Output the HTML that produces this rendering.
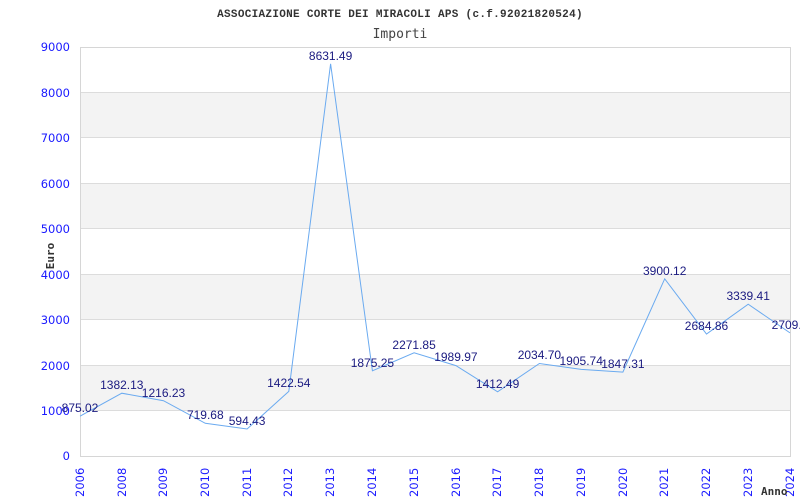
<!DOCTYPE html>
<html><head><meta charset="utf-8"><style>html,body{margin:0;padding:0;background:#fff;}svg{display:block}</style></head>
<body>
<svg width="800" height="500" viewBox="0 0 800 500" xmlns="http://www.w3.org/2000/svg">
<rect width="800" height="500" fill="#fff"/>
<g fill="#f3f3f3">
<rect x="80" y="92.4" width="710" height="45.5"/>
<rect x="80" y="183.3" width="710" height="45.5"/>
<rect x="80" y="274.2" width="710" height="45.5"/>
<rect x="80" y="365.1" width="710" height="45.5"/>
</g>
<g stroke="#dcdcdc" stroke-width="1">
<line x1="80" x2="790" y1="92.5" y2="92.5"/>
<line x1="80" x2="790" y1="137.5" y2="137.5"/>
<line x1="80" x2="790" y1="183.5" y2="183.5"/>
<line x1="80" x2="790" y1="228.5" y2="228.5"/>
<line x1="80" x2="790" y1="274.5" y2="274.5"/>
<line x1="80" x2="790" y1="319.5" y2="319.5"/>
<line x1="80" x2="790" y1="365.5" y2="365.5"/>
<line x1="80" x2="790" y1="410.5" y2="410.5"/>
</g>
<rect x="80.5" y="47.5" width="710" height="409" fill="none" stroke="#d6d6d6"/>
<text x="400" y="17" text-anchor="middle" font-family="Liberation Mono, monospace" font-weight="bold" font-size="11" fill="#333" letter-spacing="0.3">ASSOCIAZIONE CORTE DEI MIRACOLI APS (c.f.92021820524)</text>
<text x="400" y="38" text-anchor="middle" font-family="DejaVu Sans Mono, monospace" font-size="13" fill="#444">Importi</text>
<g font-family="DejaVu Sans, sans-serif" font-size="11.5" fill="#1a1aff" text-anchor="end">
<text x="70" y="51">9000</text><text x="70" y="97">8000</text><text x="70" y="142">7000</text>
<text x="70" y="188">6000</text><text x="70" y="233">5000</text><text x="70" y="279">4000</text>
<text x="70" y="324">3000</text><text x="70" y="370">2000</text><text x="70" y="415">1000</text>
<text x="70" y="460">0</text>
</g>
<text transform="translate(54,256) rotate(-90)" text-anchor="middle" font-family="DejaVu Sans Mono, monospace" font-weight="bold" font-size="11" fill="#333">Euro</text>
<g font-family="DejaVu Sans, sans-serif" font-size="11.5" fill="#1a1aff">
<text transform="translate(84,497) rotate(-90)">2006</text>
<text transform="translate(126,497) rotate(-90)">2008</text>
<text transform="translate(167,497) rotate(-90)">2009</text>
<text transform="translate(209,497) rotate(-90)">2010</text>
<text transform="translate(251,497) rotate(-90)">2011</text>
<text transform="translate(292,497) rotate(-90)">2012</text>
<text transform="translate(334,497) rotate(-90)">2013</text>
<text transform="translate(376,497) rotate(-90)">2014</text>
<text transform="translate(418,497) rotate(-90)">2015</text>
<text transform="translate(460,497) rotate(-90)">2016</text>
<text transform="translate(501,497) rotate(-90)">2017</text>
<text transform="translate(543,497) rotate(-90)">2018</text>
<text transform="translate(585,497) rotate(-90)">2019</text>
<text transform="translate(627,497) rotate(-90)">2020</text>
<text transform="translate(668,497) rotate(-90)">2021</text>
<text transform="translate(710,497) rotate(-90)">2022</text>
<text transform="translate(752,497) rotate(-90)">2023</text>
<text transform="translate(794,497) rotate(-90)">2024</text>
</g>
<text x="761" y="495" font-family="DejaVu Sans Mono, monospace" font-weight="bold" font-size="11" fill="#333">Anno</text>
<polyline fill="none" stroke="#6aaaf0" stroke-width="1" points="80,416.2 121.8,393.2 163.5,400.7 205.3,423.3 247.1,429 288.8,391.4 330.6,63.8 372.4,370.8 414.1,352.8 455.9,365.6 497.6,391.8 539.4,363.5 581.2,369.4 622.9,372.1 664.7,278.8 706.5,334 748.2,304.2 790,332.9"/>
<g font-family="Liberation Sans, Arial, sans-serif" font-size="12" fill="#1a1a80" text-anchor="middle">
<text x="80" y="412">875.02</text>
<text x="121.8" y="389">1382.13</text>
<text x="163.5" y="397">1216.23</text>
<text x="205.3" y="419">719.68</text>
<text x="247.1" y="425">594.43</text>
<text x="288.8" y="387">1422.54</text>
<text x="330.6" y="60">8631.49</text>
<text x="372.4" y="367">1875.25</text>
<text x="414.1" y="349">2271.85</text>
<text x="455.9" y="361">1989.97</text>
<text x="497.6" y="388">1412.49</text>
<text x="539.4" y="359">2034.70</text>
<text x="581.2" y="365">1905.74</text>
<text x="622.9" y="368">1847.31</text>
<text x="664.7" y="275">3900.12</text>
<text x="706.5" y="330">2684.86</text>
<text x="748.2" y="300">3339.41</text>
<text x="790" y="329">2709.7</text>
</g>
</svg>
</body></html>
